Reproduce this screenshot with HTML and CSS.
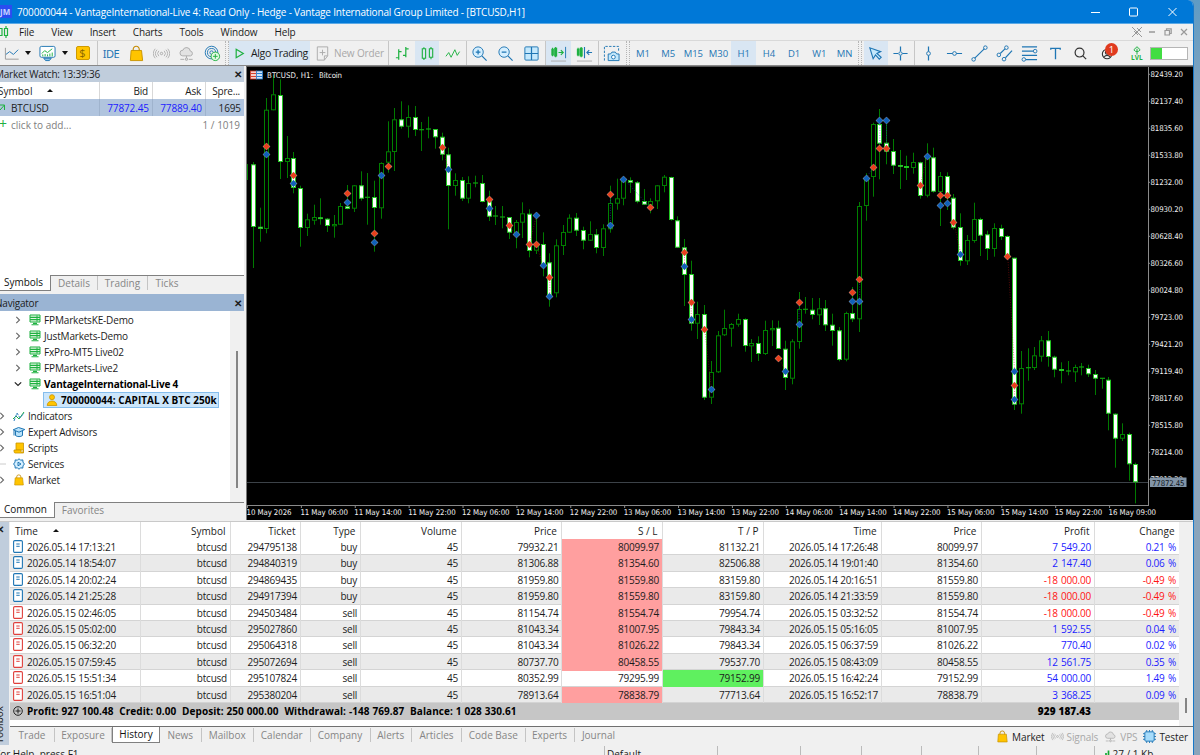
FILE: index.html
```html
<!doctype html>
<html>
<head>
  <meta charset="utf-8">
  <title>700000044 - VantageInternational-Live 4</title>
  <link rel="stylesheet" href="styles.css">
</head>
<body>

<!-- shared icons -->
<svg class="sprite">
  <symbol id="server" viewBox="0 0 12 12">
    <path d="M1 1h10v7H1z" fill="#e4f7e4" stroke="#1fb141"/>
    <path d="M1 3.3h10M1 5.7h10" stroke="#1fb141" stroke-width="1.2"/>
    <path d="M2.5 10.8h7M4 9.4h4" stroke="#1fb141" stroke-width="1.1"/>
    <path d="M8 1.5v6" stroke="#1fb141"/>
  </symbol>
  <symbol id="bag" viewBox="0 0 18 18">
    <path d="M5.5 7V4.5a3.2 3.2 0 0 1 6.4 0V7" fill="none" stroke="#c48a00" stroke-width="1.2"/>
    <path d="M3.3 5.8h11l1.2 10.7H2.5z" fill="#ffc400" stroke="#c99400"/>
  </symbol>
  <symbol id="doc" viewBox="0 0 10 13">
    <rect x=".6" y=".6" width="8.8" height="11.8" rx="1.2" fill="#fff" stroke="currentColor" stroke-width="1.1"/>
    <path d="M3.3 4h3.4M3.3 6.3h3.4" stroke="currentColor"/>
  </symbol>
  <symbol id="cloud" viewBox="0 0 18 18">
    <path d="M5 11.5a3 3 0 0 1 .2-6A4 4 0 0 1 13 6.4a2.6 2.6 0 0 1 .3 5.1zM9 11.5V14M2.5 15.2h4M11.500 15.200h4" fill="#e2e2e2" stroke="#aaa"/>
    <circle cx="9" cy="15" r="1.3" fill="#ddd" stroke="#aaa"/>
  </symbol>
  <symbol id="signal" viewBox="0 0 18 18">
    <circle cx="9" cy="9" r="1.3" fill="none" stroke="#aaa"/>
    <path d="M6.200 6.200a4 4 0 0 0 0 5.600M11.800 6.200a4 4 0 0 1 0 5.600M4.300 5a6 6 0 0 0 0 8M13.700 5a6 6 0 0 1 0 8M2.300 4a8 8 0 0 0 0 10M15.700 4a8 8 0 0 1 0 10" fill="none" stroke="#aaa" stroke-width=".9"/>
  </symbol>
  <symbol id="right" viewBox="0 0 8 8"><path d="M2.300 .8L5.500 4 2.300 7.200" fill="none" stroke="#666" stroke-width="1.1"/></symbol>
</svg>

<div class="window">
  <header class="titlebar">
    <span class="logo">JM</span>
    <span class="title">700000044 - VantageInternational-Live 4: Read Only - Hedge - Vantage International Group Limited - [BTCUSD,H1]</span>
    <svg class="win-buttons" width="90" height="12" viewBox="0 0 90 12" fill="none" stroke="#fff">
      <path d="M0 6.500h9M77.500 2l8 8M85.500 2l-8 8"/>
      <rect x="38.500" y="2" width="8" height="8" rx="1"/>
    </svg>
  </header>

  <nav class="menubar">
    <svg width="9" height="14" viewBox="0 0 9 14" fill="none" stroke="#1fb141" stroke-width="1.200"><path d="M-1 3.500h3v7h-3M6 1v2.500M6 10.500V13M4.500 3.500h3v7h-3z"/></svg>
    <span>File</span><span>View</span><span>Insert</span><span>Charts</span><span>Tools</span><span>Window</span><span>Help</span>
    <svg class="mdi" width="58" height="12" viewBox="0 0 58 12" fill="none" stroke="#999">
      <path d="M1 1l10 10M11 1L1 11M6 2l4 4M3 5l4 4"/>
      <path d="M18 6h6" stroke-width="1.300"/>
      <path d="M34 4.500h4.500V9H34zM35.500 4V2.800h4.700v4.700H39" stroke-width="1.200"/>
      <path d="M50 3l6 6M56 3l-6 6" stroke-width="1.200"/>
    </svg>
  </nav>

  <div class="toolbar">
    <div><svg viewBox="0 0 18 18"><path d="M1.500 3v12h14" stroke="#999"/><path d="M2 10l4-3 4 3 5-5"/></svg></div>
    <div class="caret"></div>
    <div><svg viewBox="0 0 18 18"><rect x="1" y="1.500" width="16" height="11.500" rx="1.500" fill="#fff"/><path d="M5 14l2 2.500h4l2-2.500z" fill="#8cc4e8"/><path d="M3 9l3-3 3 2 5-4" stroke="#1fb141"/><path d="M4 12v-2M6.500 12V9.500M9 12v-2M11.500 12V9M14 12V8" stroke="#1fb141"/></svg></div>
    <div class="caret"></div>
    <div><span class="dollar">$</span></div>
    <div class="sep"></div>
    <div class="ide">IDE</div>
    <div><svg><use href="#bag"/></svg></div>
    <div><svg><use href="#signal"/></svg></div>
    <div><svg><use href="#cloud"/></svg></div>
    <div><svg viewBox="0 0 18 18"><circle cx="8" cy="8" r="6.700"/><circle cx="8" cy="8" r="4.300"/><circle cx="8" cy="8" r="1.800"/><circle cx="12" cy="12" r="4.500" fill="#e3f8e3" stroke="#1fb141"/><path d="M12 9.500v5M9.500 12h5" stroke="#1fb141"/></svg></div>
    <div class="grip"></div>
    <div class="active algo"><svg viewBox="0 0 18 18"><path d="M5.500 4.500l7.500 4.500-7.500 4.500z" stroke="#1fb141" stroke-width="1.300"/></svg>Algo Trading</div>
    <div class="order"><svg viewBox="0 0 18 18" stroke="#aaa"><path d="M3.500 2h11v9.500L11 16H3.500zM14.500 11.500H11V16M9 5v6M6 8h6"/></svg>New Order</div>
    <div class="sep"></div>
    <div><svg viewBox="0 0 18 18" stroke="#1fb141" stroke-width="1.300"><path d="M5 4.500v11M2 13.500h3M5 7h3M12.500 2v11M9.500 11h3M12.500 4h3"/></svg></div>
    <div class="active"><svg viewBox="0 0 18 18" stroke="#1fb141" stroke-width="1.200"><path d="M3.500 4h3.500v10H3.500zM5.200 2.500V4M5.200 14v2M11 4h3.500v9H11zM12.700 2v2M12.700 13v2"/></svg></div>
    <div><svg viewBox="0 0 18 18" stroke="#1fb141"><path d="M2 12l3-4 2.500 5 4-8 2.500 6 2.500-4"/></svg></div>
    <div class="sep"></div>
    <div><svg viewBox="0 0 18 18"><circle cx="7.500" cy="7.500" r="5.500" fill="#d5efff"/><path d="M11.500 11.500l5 5M7.500 5v5M5 7.500h5" stroke-width="1.300"/></svg></div>
    <div><svg viewBox="0 0 18 18"><circle cx="7.500" cy="7.500" r="5.500" fill="#d5efff"/><path d="M11.500 11.500l5 5M5 7.500h5" stroke-width="1.300"/></svg></div>
    <div><svg viewBox="0 0 18 18"><rect x="2" y="2" width="14" height="14" rx="1" fill="#c4e8fc"/><path d="M9 2v14M2 9h14" stroke-width="1.300"/></svg></div>
    <div class="sep"></div>
    <div class="active"><svg viewBox="0 0 18 18"><path d="M2 4.500h1.500v6H2zM5 3.500h2v8H5zM2.700 3v9M6 2v11M9 8h5M11.500 5.500L14 8l-2.500 2.500" stroke="#1fb141" stroke-width="1.200"/><path d="M16.500 2v12"/><path d="M1 17h16" stroke="#aaa"/></svg></div>
    <div><svg viewBox="0 0 18 18"><path d="M1.500 4.500H3v6H1.500zM4.500 3.500h2v8h-2zM2.200 3v9M5.500 2v11" stroke="#1fb141" stroke-width="1.200"/><path d="M9 2v12M17 8h-5.500M14 5.500L11.500 8l2.500 2.500" stroke-width="1.200"/><path d="M1 17h16" stroke="#aaa"/></svg></div>
    <div class="sep"></div>
    <div><svg viewBox="0 0 18 18"><path d="M1.500 16.500v-15h15v5" stroke-dasharray="2.500 1.500"/><path d="M5.500 9.500H8L9.500 7.500h3.500L14.500 9.500h2.500v7H5.500z" fill="#c4e8fc"/><circle cx="11" cy="12.800" r="2" fill="#fff"/></svg></div>
    <div class="grip"></div>
    <div>M1</div><div>M5</div><div>M15</div><div>M30</div><div class="active">H1</div><div>H4</div><div>D1</div><div>W1</div><div>MN</div>
    <div class="grip"></div>
    <div class="active"><svg viewBox="0 0 18 18"><path d="M3 3l3.500 11.500L9 10.500l4 4.500 2-2-4.500-4L14.500 7z" fill="#c4e8fc" stroke-width="1.200"/></svg></div>
    <div><svg viewBox="0 0 18 18"><path d="M9 1.500v5M9 11v5.500M1.500 9h5M11 9h5.500" stroke-width="1.300"/><circle cx="9" cy="9" r="1.800"/></svg></div>
    <div class="sep"></div>
    <div><svg viewBox="0 0 18 18"><path d="M9 1.500v5.500M9 11v5.500" stroke-width="1.300"/><circle cx="9" cy="9" r="2"/></svg></div>
    <div><svg viewBox="0 0 18 18"><path d="M1 9h6M11 9h6" stroke-width="1.300"/><circle cx="9" cy="9" r="2"/></svg></div>
    <div><svg viewBox="0 0 18 18"><path d="M4 14L14 4" stroke-width="1.200"/><circle cx="2.800" cy="15.200" r="1.900"/><circle cx="15.200" cy="2.800" r="1.900"/></svg></div>
    <div><svg viewBox="0 0 18 18"><path d="M4.500 9l5-5M10 13.500l7-7.500" stroke-width="1.200"/><circle cx="3" cy="10.500" r="1.900"/><circle cx="11" cy="2.800" r="1.900"/><circle cx="8.500" cy="15" r="1.900"/></svg></div>
    <div><svg viewBox="0 0 18 18"><path d="M1 2h16M1 6.500h12M1 11h16M5 15.500h12" stroke-width="1.200"/><circle cx="15" cy="6.500" r="1.900"/><circle cx="3" cy="15.300" r="1.900"/></svg></div>
    <div><svg viewBox="0 0 18 18"><path d="M4 5V3.500h10V5M9 3.500V15" stroke-width="1.400"/></svg></div>
    <div><svg viewBox="0 0 18 18" stroke="#333" stroke-width="1.300"><circle cx="8" cy="8" r="4.700"/><path d="M11.500 11.500l3.500 3.500"/></svg></div>
    <div class="user"><svg viewBox="0 0 18 18" stroke="#333" stroke-width="1.200"><circle cx="7.500" cy="9.500" r="5"/><circle cx="7.500" cy="8" r="1.800"/><path d="M4.500 12.500c1.500-2 4.500-2 6 0"/></svg><span class="badge">1</span></div>
    <div class="lvl"><svg viewBox="0 0 10 10" stroke="#1fb141" stroke-width="1.100"><path d="M5 .8L8.500 4.200 6.500 6h-3l-2-1.800zM5 3v6.500"/></svg>LVL</div>
    <div class="battery"><i></i></div>
  </div>

  <main>
    <aside>
      <div class="panel-head"><span>Market Watch: 13:39:36</span><b>✕</b></div>
      <div class="watch watch-head"><span>Symbol <i class="up"></i></span><span>Bid</span><span>Ask</span><span>Spre...</span></div>
      <div class="watch watch-row"><span><svg width="6" height="8" viewBox="0 0 6 8"><path d="M0 1h4.500v5M4.500 1L0 6" fill="none" stroke="#1fb141"/></svg>BTCUSD</span><span class="blue">77872.45</span><span class="blue">77889.40</span><span>1695</span></div>
      <div class="watch-add"><span><i>+</i>click to add...</span><span>1 / 1019</span></div>
      <div class="blank"></div>
      <div class="tabs market-tabs"><span class="on">Symbols</span><span>Details</span><span>Trading</span><span>Ticks</span></div>
      <div class="panel-head nav-head"><span>Navigator</span><b>✕</b></div>
      <div class="navigator">
        <ul>
          <li class="sub"><svg class="exp"><use href="#right"/></svg><svg><use href="#server"/></svg>FPMarketsKE-Demo</li>
          <li class="sub"><svg class="exp"><use href="#right"/></svg><svg><use href="#server"/></svg>JustMarkets-Demo</li>
          <li class="sub"><svg class="exp"><use href="#right"/></svg><svg><use href="#server"/></svg>FxPro-MT5 Live02</li>
          <li class="sub"><svg class="exp"><use href="#right"/></svg><svg><use href="#server"/></svg>FPMarkets-Live2</li>
          <li class="sub bold"><svg class="exp" viewBox="0 0 8 8"><path d="M.8 2.300L4 5.500l3.200-3.200" fill="none" stroke="#222" stroke-width="1.200"/></svg><svg><use href="#server"/></svg>VantageInternational-Live 4</li>
          <li class="account bold"><span><svg viewBox="0 0 12 12" fill="#ffc400" stroke="#c99400" stroke-width=".8"><circle cx="6" cy="3.200" r="2.500"/><path d="M1.200 11.500c0-6 9.600-6 9.600 0z"/></svg>700000044: CAPITAL X BTC 250k</span></li>
          <li><svg class="exp"><use href="#right"/></svg><svg viewBox="0 0 12 12" fill="none"><path d="M0 9l3-3 3 3 5-7" stroke="#1fb141"/><path d="M1 11l3-8 3 5 4-5" stroke="#2b7fbf" stroke-dasharray="3 1"/></svg>Indicators</li>
          <li><svg class="exp"><use href="#right"/></svg><svg viewBox="0 0 12 12" fill="#b9e2fa" stroke="#1f76b4"><path d="M2.500 5v4.500c2 1.500 5 1.500 7 0V5"/><path d="M.2 3.800L5.500 1.500l6.300 2L6 6.200zM1 4.500v5"/></svg>Expert Advisors</li>
          <li><svg class="exp"><use href="#right"/></svg><svg viewBox="0 0 12 12" fill="#ffc400" stroke="#c99400" stroke-width=".8"><path d="M3 1h7.500v7H3z"/><path d="M1 8h7v1.500c0 1 2.500 1 2.500-1.500v3H2C1 11 1 9 1 8z"/></svg>Scripts</li>
          <li><svg class="exp" viewBox="0 0 8 8"><path d="M2 4h6" stroke="#ccc"/></svg><svg viewBox="0 0 12 12" fill="#d5efff" stroke="#1f76b4"><path d="M6 .7l1.500 1.500 2.300-.3.200 2.200L11.400 6 10 7.900l-.2 2.200-2.300-.3L6 11.300 4.500 9.800l-2.300.3L2 7.900.6 6 2 4.100l.2-2.200 2.300.3z"/><path d="M5 4.200L8 6 5 7.800z"/></svg>Services</li>
          <li><svg class="exp"><use href="#right"/></svg><svg><use href="#bag"/></svg>Market</li>
        </ul>
        <div class="rail"><i></i></div>
      </div>
      <div class="tabs nav-tabs"><span class="on">Common</span><span>Favorites</span></div>
    </aside>
    <section class="chart">
      <svg id="chart" width="947" height="453" viewBox="247 67 947 453"></svg>
    </section>
  </main>

  <section class="toolbox">
    <div class="strip"><b>✕</b><span>Toolbox</span></div>
    <div class="history">
      <div class="deals">
        <div id="deals">
          <div class="row head"><span>Time <i class="up"></i></span><span>Symbol</span><span>Ticket</span><span>Type</span><span>Volume</span><span>Price</span><span>S / L</span><span>T / P</span><span>Time</span><span>Price</span><span>Profit</span><span>Change</span></div>
        </div>
        <div class="rail"><i></i></div>
      </div>
      <div class="bottom">
        <div class="tabs box-tabs"><span>Trade</span><span>Exposure</span><span class="on">History</span><span>News</span><span>Mailbox</span><span>Calendar</span><span>Company</span><span>Alerts</span><span>Articles</span><span>Code Base</span><span>Experts</span><span>Journal</span></div>
        <div class="services">
          <span><svg><use href="#bag"/></svg>Market</span>
          <span class="off"><svg><use href="#signal"/></svg>Signals</span>
          <span class="off"><svg><use href="#cloud"/></svg>VPS</span>
          <span><svg viewBox="0 0 14 14" stroke="#1f76b4"><path d="M4 0v14M7 0v14M10 0v14M0 4h14M0 7h14M0 10h14"/><rect x="2" y="2" width="10" height="10" rx="1" fill="#a6dcfb"/></svg>Tester</span>
        </div>
      </div>
    </div>
  </section>

  <footer>
    <span>For Help, press F1</span><span>Default</span><span></span><span></span><span></span><span></span><span></span><span></span>
    <span class="traffic"><svg width="10" height="10" viewBox="0 0 10 10"><path d="M1 10V7.500M3.500 10V5.500M6 10V3M8.500 10V.5" stroke="#14a832" stroke-width="1.700"/></svg>27 / 1 Kb</span>
  </footer>
</div>

<script src="app.js"></script>
</body>
</html>
```
FILE: styles.css
```css
* {
  box-sizing: border-box;
}
body {
  margin: 0;
  width: 1200px; height: 755px;
  overflow: hidden;
  background: linear-gradient(#5f9bc4, #8ba6bd 120px, #8ba4ba);
  font-family: "Open Sans", "Noto Sans", sans-serif;
  font-size: 10px;
  letter-spacing: -0.22px;
  color: #1c1c1c;
}
i { font-style: normal; }
.sprite { display: none; }
.window {
  display: flex; flex-direction: column;
  width: 1194px; height: 755px;
  border-right: 1px solid #1878c8;
  border-top-right-radius: 6px;
  background: #f0f0f0;
  overflow: hidden;
}

/* title and menu */
.titlebar {
  display: flex; align-items: center;
  flex: none; height: 24px;
  background: #0078d7;
  border-bottom: 1px solid #5aa9e6;
  color: #fff;
  white-space: nowrap;
}
.title { letter-spacing: -0.17px; }
.logo {
  width: 12px; height: 13px;
  margin-right: 5px;
  background: #2a4df0;
  color: #c8d4ff;
  font-size: 8px; font-weight: bold; line-height: 13px;
  letter-spacing: 0;
}
.win-buttons { margin-left: auto; margin-right: 12px; }
.menubar {
  display: flex; align-items: center;
  flex: none; height: 17px;
  border-bottom: 1px solid #d9d9d9;
}
.menubar svg:first-child { margin-right: 10px; }
.menubar span { margin-right: 17.2px; letter-spacing: -0.17px; }
.menubar .mdi { margin-left: auto; margin-right: 4px; }

/* toolbar */
.toolbar {
  display: grid;
  grid-template-columns: 24px 8px 30px 6px 29px 1px 26px 25px 25px 25.5px 25.5px 4px 81px 77px 2px 26px 24px 26.5px 1px 26.5px 25px 26px 2px 24.5px 27px 1px 26.5px 5.4px repeat(9, 25.2px) 6.8px 24px 26px 2px 26px 25px 25px 25px 26px 25px 25px 31px 26px 43px;
  flex: none; height: 25px;
  border-bottom: 1px solid #888;
  color: #1f76b4;
  letter-spacing: 0;
}
.toolbar > div {
  display: flex; align-items: center; justify-content: center;
  min-width: 0;
  font-size: 9.5px;
}
.toolbar svg { flex: none; width: 17px; height: 17px; }
.toolbar div > svg { fill: none; }
.toolbar svg:not([stroke]) { stroke: #1f76b4; }
.toolbar .active { background: #d9e6f3; }
.toolbar .sep { background: #c6c6c6; justify-self: center; width: 1px; }
.toolbar .grip { border-left: 1px dotted #b5b5b5; border-right: 1px dotted #b5b5b5; width: 4px; justify-self: center; }
.caret::before {
  content: "";
  border: 3px solid transparent;
  border-top: 4px solid #111; border-bottom: 0;
}
.dollar {
  width: 14px; height: 14px;
  border: 1px solid #cf9a00; border-radius: 2px;
  background: #ffc400;
  color: #8a6400;
  font-size: 11px; line-height: 12px; text-align: center;
}
.toolbar .ide { font-size: 11px; font-family: "Noto Sans", sans-serif; letter-spacing: -0.5px; }
.toolbar .algo, .toolbar .order {
  justify-content: flex-start;
  padding-left: 2px;
  font-size: 10.5px;
  letter-spacing: -0.35px;
  color: #1c1c1c;
  white-space: nowrap;
}
.toolbar .algo svg { margin-right: 3px; }
.toolbar .order { color: #a8a8a8; padding-left: 4px; font-size: 10px; letter-spacing: -0.15px; }
.toolbar .order svg { margin-right: 3px; }
.toolbar .user { position: relative; }
.badge {
  position: absolute; left: 12px; top: 2px;
  width: 13px; height: 13px;
  border-radius: 50%;
  background: #e03a1e;
  color: #fff;
  line-height: 13px; text-align: center;
}
.toolbar .lvl { flex-direction: column; font-size: 6.5px; font-weight: bold; line-height: 6px; color: #1fb141; }
.toolbar .lvl svg { width: 10px; height: 9px; }
.toolbar .battery { justify-content: flex-start; }
.battery i {
  width: 38px; height: 13px;
  border: 1px solid #b5b5b5;
  background: linear-gradient(90deg, #42dd42 11px, #fff 11px);
}

/* left column */
main { display: flex; flex: none; height: 454px; }
aside {
  display: flex; flex-direction: column;
  width: 246px;
  padding: 0 2px 1px 0;
}
.panel-head {
  display: flex; align-items: center; justify-content: space-between;
  flex: none; height: 16px;
  padding-right: 2px;
  background: #c0cddc;
}
.panel-head span { margin-left: -5px; }
.nav-head { height: 17px; margin-top: 3px; background: #9ab4d3; }
.watch {
  display: grid;
  grid-template-columns: 100px 53px 53px 38px;
  flex: none; height: 17px;
  line-height: 18px;
  background: #fff;
}
.watch span { padding-right: 4px; border-right: 1px solid #d8d8d8; text-align: right; }
.watch span:last-child { border: 0; }
.watch span:first-child { text-align: left; }
.watch-head span:first-child { margin-left: -2px; letter-spacing: 0; }
.watch-row { background: #b0c4de; letter-spacing: -0.1px; }
.watch-row span { border-color: #9fb3cd; padding-right: 3px; }
.watch-row svg { margin-right: 5px; }
.up {
  display: inline-block;
  margin: 0 0 3px 12px;
  border: 3px solid transparent;
  border-bottom: 3px solid #111; border-top: 0;
}
.watch-add {
  display: flex; justify-content: space-between;
  flex: none; height: 17px;
  padding-right: 4px;
  background: #fff;
  color: #808080;
  line-height: 18px;
  letter-spacing: 0;
}
.watch-add i { display: inline-block; width: 12px; margin-left: -1px; color: #1fb141; font-size: 14px; line-height: 10px; }
.blank { flex: 1; background: #fff; }

.tabs {
  display: grid;
  flex: none; height: 16px;
  border-top: 1px solid #808080;
  color: #868686;
  line-height: 15px;
  text-align: center;
  letter-spacing: 0;
}
.tabs span { border-right: 1px solid #c4c4c4; height: 14px; }
.tabs span:last-child { border: 0; }
.tabs .on {
  height: 16px;
  margin-top: -1px;
  border: 1px solid #808080; border-top: 0;
  background: #fff;
  color: #111;
}
.market-tabs { grid-template-columns: 51px 47px 50px 38px; }
.market-tabs .on, .nav-tabs .on { border-left: 0; padding-right: 3px; }
.nav-tabs { grid-template-columns: 55px 56px; height: 17px; }

.navigator { display: flex; flex: none; height: 191px; background: #fff; }
.navigator ul { flex: 1; margin: 0; padding: 1px 0 0; list-style: none; }
.navigator li {
  display: flex; align-items: center;
  height: 16.05px;
  white-space: nowrap;
}
.navigator li svg { width: 12px; height: 12px; margin-right: 4px; }
.navigator li .exp { width: 8px; height: 8px; margin: 0 5px 0 -2px; }
.navigator li .exp + svg { margin-left: 2px; margin-right: 3px; }
.navigator li.sub { letter-spacing: -0.15px; }
.navigator li.sub.bold { letter-spacing: -0.2px; }
.navigator li.sub .exp { margin: 0 5px 0 14px; }
.navigator .sub .exp + svg { margin-left: 2px; }
.bold { font-weight: bold; color: #000; }
.navigator .account span {
  display: flex; align-items: center;
  height: 16px;
  margin-left: 43px; padding: 0 1px 0 2px;
  border: 1px solid #85bdec;
  background: #cce6fb;
  letter-spacing: 0.03px;
}
.navigator .account svg { margin-right: 3px; }
.rail { width: 14px; background: #f0f0f0; }
.navigator .rail i { display: block; width: 2px; height: 137px; margin: 40px 0 0 6px; background: #858585; }

/* price chart */
.chart {
  width: 947px;
  border-top: 1px solid #555; border-left: 1px solid #777;
  background: #000;
}
.chart svg { display: block; }
.chart text { fill: #f2f2f2; font: 7.8px "DejaVu Sans Condensed", "DejaVu Sans", sans-serif; letter-spacing: 0; }
.chart text.last { fill: #10161c; }
.wick { stroke: #007a00; stroke-width: 1; }
.up-bar { fill: #000; stroke: #008000; }
.down-bar { fill: #fff; stroke: #22c522; }
.flat { stroke: #10a010; stroke-width: 1.2; }
.axis { stroke: #8a8a8a; fill: none; }
.link { fill: none; stroke-dasharray: 1 1.5; stroke-width: .7; opacity: .75; }

/* toolbox */
.toolbox { display: flex; flex: none; height: 225px; border-top: 1px solid #c9c9c9; margin-top: 1px; }
.strip {
  display: flex; flex-direction: column; justify-content: space-between;
  width: 9px; height: 223px;
  background: #c0cddc;
  overflow: hidden;
}
.strip b { margin-left: -4px; }
.strip span { writing-mode: vertical-rl; transform: rotate(180deg); margin-left: -8px; margin-bottom: 2px; letter-spacing: 0; }
.history { width: 1184px; }
.deals { display: flex; height: 204px; background: #fff; margin-left: 1px; }
.row {
  display: grid;
  grid-template-columns: 130.5px 90px 70px 60px 101px 100.5px 100.5px 101px 118px 100px 113px 84px;
  height: 16.4px;
  border-bottom: 1px solid #d4d4d4;
  line-height: 16.8px;
}
.row span { padding-right: 2.5px; border-right: 1px solid #dcdcdc; text-align: right; white-space: nowrap; }
.row span:first-child { text-align: left; }
.row span:last-child { border: 0; }
.row:nth-child(odd) { background: #eaeaea; }
.row.head { height: 17px; background: #fff; border: 0; line-height: 18px; }
.row.head span { padding: 0 4px 0 5px; letter-spacing: 0; }
.row svg { float: left; width: 10px; height: 13px; margin: 1px 4px 0 3px; }
.buy svg { color: #1f76b4; }
.sell svg { color: #e0403c; }
.blue { color: #1c1cff; }
.red { color: #ff1414; }
.row .blue, .row .red { word-spacing: 1px; }
.row .sl { background: #ff9f9f; }
.row .tp { background: #5ff05f; }
.total {
  display: flex; align-items: center;
  height: 16.6px;
  background: #c6c6c6;
  font-weight: bold; color: #000;
  letter-spacing: 0.05px; word-spacing: 0.3px;
  white-space: pre;
}
.total svg { width: 10px; height: 10px; margin: 0 4px 0 3px; }
.total b { margin-left: auto; margin-right: 87.500px; }
.deals .rail i { display: block; width: 2px; height: 15px; margin: 176px 0 0 6px; background: #858585; }
.bottom { display: flex; height: 20px; border-top: 1px solid #707070; margin-left: 1px; }
.bottom .tabs { height: 17px; border: 0; margin-top: 1px; }
.box-tabs { grid-template-columns: 45px 57px 48px 41.500px 52.500px 56.500px 60px 41.500px 50px 63.500px 49px 48px; }
.services { display: flex; margin-left: auto; padding-right: 5px; letter-spacing: -0.1px; }
.services span { display: flex; align-items: center; margin-left: 6px; }
.services svg { width: 13px; height: 13px; margin-right: 3px; fill: none; }
.services .off { color: #a8a8a8; }

footer {
  display: grid;
  grid-template-columns: 605px 112.500px 83.500px 60.500px 60px 57px 58px 58px 1fr;
  flex: none; height: 20px;
  line-height: 16px;
}
footer span { border-right: 1px solid #bbb; padding-left: 2px; letter-spacing: 0; }
footer span:first-child { text-indent: -7px; }
footer .traffic { border: 0; padding-left: 5px; }
footer svg { float: left; margin: 4px 3px 0 0; }
```
FILE: app.js
```js
// H1 bars: [high, open/close top, open/close bottom, low, kind] in canvas units
// kind: 0 = down, 1 = up, 2 = flat
var bars = [
  [162,164.3,227,268,0],[207.7,226.7,229,241.7,0],[98,109.7,229,233.3,1],[75,94.3,110.3,110.3,1],
  [79.3,95,162,179,0],[136,158,162,178,1],[152,158,188,193.3,0],[185.7,188,228,246.7,0],
  [213.7,219.3,228,236,1],[204.7,217,220.7,224.7,1],[198.3,217.3,219,224.7,0],[218,218.7,226,232,0],
  [215,224,226.3,237.7,1],[203,206,224.7,225,1],[185,206.3,209,209.3,0],[185,185.3,208.7,212,1],
  [171.3,185.3,198.7,200.7,0],[173,197.3,198,224.7,2],[180.7,197,208,251.7,0],[162.3,163,208.3,218.7,1],
  [121.3,151.3,162.7,172.7,1],[108,119.3,152,171,1],[101.3,119.3,126.7,128.7,0],[105.3,117,126.7,137.7,1],
  [106,117,130,136,0],[122,129.7,130.3,151,2],[116.7,129,129.7,138.3,2],[129,129,137.3,148.7,0],
  [132.7,136.7,154.7,160.3,0],[147.7,154.3,186,229.3,0],[173.3,180,186,195.7,1],[177,180,198.7,201,0],
  [176.3,183,198.7,203.3,1],[175.7,183,183.7,187.3,2],[175,183,202,202.3,0],[190.7,201.3,216.7,221,0],
  [206,216,217.3,225,2],[206,217,217.7,228.3,2],[217,217,232.7,239,0],[220,222,235.7,248.3,1],
  [202.3,213.3,222.7,238,1],[209.3,213.7,251,257.3,0],[215,244,250.7,254,1],[232.3,244,265.3,276.3,0],
  [253.3,262.3,296.7,306.7,0],[239.3,245.3,293.3,297.3,1],[225,232,246,255,1],[214.3,217.7,232.7,233,1],
  [213,217.7,230.7,236,0],[226.7,230,240.7,249.3,0],[221.3,234,240.7,241,1],[229,234.3,248,253.3,0],
  [224.3,228.3,248,256,1],[185.7,203,229.3,232.7,1],[178.7,198.3,203.7,209.7,1],[176.7,179.3,198.7,205.3,1],
  [177.3,180,182.7,193,0],[181,182.3,201.7,203.3,0],[189,201,204.7,205,0],[198.3,201,205.3,213.3,1],
  [185,185.3,201.3,209,1],[175,176.7,186,192.3,1],[176.7,177,220,220.7,0],[216.3,220.3,247.7,247.7,0],
  [239,247.3,275,306,0],[260.7,274,323.7,330.7,0],[301.7,314,323.7,339,1],[305,314,397.7,400,0],
  [361,372,397.7,404,1],[331,335.3,372.3,373,1],[309.7,328,335.3,336,1],[323,324,328.7,346.7,1],
  [313.7,319,324.7,326.7,1],[318.3,319,346,351.7,0],[339,343,346.3,362,1],[336.3,343,354,361,0],
  [320.7,330,354,355,1],[320.3,328,330.3,346,1],[320.7,327.7,349,349,0],[340.7,348.7,378,390,0],
  [339.3,341.3,378.7,384.3,1],[292,309,342,348.7,1],[297,309.3,310,313.7,2],[298,309.7,315,319.3,0],
  [298,308.3,315.3,325,1],[300,308.3,325.3,331,0],[313.7,324.7,331,345.7,0],[327,330.3,360,361.3,0],
  [311.7,313,359.7,361.3,1],[287,313,319.3,322,0],[202,206,319.3,332,1],[173.3,178.7,206,220.7,1],
  [122.7,124,177,196.7,1],[109,124,143.7,179.3,0],[120,142.7,151.7,164.3,0],[139,151,165.7,174,0],
  [150,165,166.7,189,0],[155.7,166,168,180,0],[152.7,162,168,173.7,1],[161.7,162.3,196,198.7,0],
  [143.3,156.7,195.7,197.3,1],[147.7,157.3,191.7,192.7,0],[172,176,192,226,1],[172.3,176,198,210,0],
  [194,197.7,227.7,229.3,0],[213.3,227,261,265.7,0],[235,240,261.3,265,1],[202.7,219,241,242.7,1],
  [217.7,219,235.7,256,0],[230.7,234.3,249,260,0],[223.3,228,249,256.7,1],[224.7,228,237,240,0],
  [235.3,236,257,260,0],[257.7,257.7,404.7,410,0],[351,368,404.3,413.7,1],[348.3,367.7,368.3,380.7,2],
  [347,355.3,368,370,1],[336,340.3,356.7,361.7,1],[331,340.3,357,366.7,0],[355.7,356.7,369.7,377.3,0],
  [362.3,369,371,383.3,0],[361,371,372,375.3,2],[364.7,367,372.3,382,1],[363,367,368.3,375.3,2],
  [364.7,368,374.3,377,0],[370,374,378.7,395,0],[378,378.3,379.7,388.7,2],[377,379.7,413.7,430.3,0],
  [413.3,413.7,438.7,467.7,0],[423.3,434,438.7,441,1],[432.7,434,464.3,480.7,0],[462.7,464,482.3,503.3,0]
];

// deal marks: [bar, y]
var sells = [[2,146],[6,175],[14,193.3],[18,233.7],[20,166.3],[28,147.3],[35,199.7],[38,225.7],[41,244.3],[42,244.3],
  [44,277.3],[53,194.7],[59,207.7],[64,252],[65,302.7],[67,329.3],[78,358],[81,302.7],[89,292.7],[90,279.3],
  [92,167],[93,148.7],[94,148.7],[99,185],[102,195],[103,195],[104,222.3],[112,256.7],[113,385.7]];
var buys = [[2,154.3],[6,183.7],[14,202],[18,242],[19,175],[29,169.7],[35,208.3],[39,234.7],[42,215.7],[43,265.7],
  [44,296.3],[53,225.3],[55,179],[64,266.3],[65,319.7],[68,389],[79,371],[81,324],[89,301.3],[90,301.3],
  [91,178.3],[93,120.3],[94,120.3],[100,156.7],[102,205.3],[103,203.7],[105,254.3],[113,371],[113,399.7]];
// dotted lines joining entry and exit: [bar, y, bar, y, colour]
var links = [[28,147,29,170,'#a01010'],[38,226,39,235,'#a01010'],[41,244,42,216,'#a01010'],[42,244,43,266,'#a01010'],
  [44,277,44,296,'#d02020'],[53,195,53,225,'#2040c0'],[55,179,59,208,'#2040c0'],[64,252,64,266,'#d02020'],
  [65,303,65,320,'#d02020'],[67,329,68,389,'#a01010'],[78,358,79,371,'#a01010'],[81,303,81,324,'#2040c0'],
  [90,279,90,301,'#2040c0'],[91,178,92,167,'#2040c0'],[93,120,93,149,'#2040c0'],[94,120,94,149,'#2040c0'],
  [99,185,100,157,'#a01010'],[104,222,105,254,'#a01010'],[112,257,113,371,'#a01010'],[113,386,113,400,'#d02020']];

function x(i) { return 253.4 + i * 6.736; }

function mark(i, y, color) {
  var c = Math.floor(x(i)) + 0.5, r = Math.floor(y) + 0.5;
  return '<path d="M' + (c - 3.5) + ' ' + r + 'h7" stroke="#c8c8c8"/>' +
    '<path d="M' + c + ' ' + (r - 3.8) + 'l3.8 3.8-3.8 3.8-3.8-3.8z" fill="#b0b0b0"/>' +
    '<path d="M' + c + ' ' + (r - 3.4) + 'l3.4 3.4-3.4 3.4-3.4-3.4z" fill="' + color + '"/>';
}

function drawChart() {
  var out = '<path class="axis" d="M1148.5 66V506M246 505.500H1148.500"/>' +
    '<path d="M246 482.500H1148" stroke="#3c4248"/>' +
    '<rect class="up-bar" x="243.500" y="164.500" width="4" height="15"/>';
  bars.forEach(function (b, i) {
    var c = Math.floor(x(i)) + 0.5;
    out += '<path class="wick" d="M' + c + ' ' + b[0] + 'V' + b[3] + '"/>';
    if (b[4] === 2) {
      out += '<path class="flat" d="M' + (c - 2.5) + ' ' + b[1] + 'h5"/>';
    } else {
      var h = Math.max(b[2] - b[1] - 1, 0.8);
      out += '<rect class="' + (b[4] ? 'up-bar' : 'down-bar') + '" x="' + (c - 2) + '" y="' + (b[1] + 0.5) + '" width="4" height="' + h + '"/>';
    }
  });
  links.forEach(function (l) {
    out += '<path class="link" stroke="' + l[4] + '" d="M' + x(l[0]) + ' ' + l[1] + 'L' + x(l[2]) + ' ' + l[3] + '"/>';
  });
  sells.forEach(function (m) { out += mark(m[0], m[1], '#e8401c'); });
  buys.forEach(function (m) { out += mark(m[0], m[1], '#1060b8'); });

  // price scale
  for (var p = 0; p < 16; p++) {
    var y = 74.3 + p * 27;
    out += '<path class="axis" d="M1148 ' + y + 'h2"/>' +
      '<text x="1150.500" y="' + (y + 3) + '" textLength="32.500">' + (82439.2 - p * 301.8).toFixed(2) + '</text>';
  }
  out += '<rect x="1150" y="477.500" width="36.500" height="9.500" fill="#8295a8"/>' +
    '<text class="last" x="1152" y="485.500" textLength="32.500">77872.45</text>';

  // time scale
  var times = ['10 May 2026'];
  for (var d = 11; d < 16; d++) times.push(d + ' May 06:00', d + ' May 14:00', d + ' May 22:00');
  times.push('16 May 09:00');
  times.forEach(function (t, n) {
    var tx = 246.5 + n * 53.88;
    out += '<path class="axis" d="M' + (tx + 1) + ' 506v2"/>' +
      '<text x="' + tx + '" y="515" textLength="' + (n ? 47.5 : 45) + '">' + t + '</text>';
  });

  // caption
  out += '<rect x="250.500" y="71" width="6" height="8" fill="#f6d0cc" stroke="#d8402c" stroke-width=".8"/>' +
    '<rect x="256.500" y="71" width="6" height="8" fill="#cfe4f8" stroke="#2b7fd0" stroke-width=".8"/>' +
    '<path d="M251 73.500h5M251 76.500h5" stroke="#d8402c"/><path d="M257 73.500h5M257 76.500h5" stroke="#2b7fd0"/>' +
    '<text x="267" y="78" textLength="46">BTCUSD, H1:</text><text x="319" y="78" textLength="23">Bitcoin</text>';
  document.getElementById('chart').innerHTML = out;
}

var deals = [
  ['2026.05.14 17:13:21','294795138','buy','79932.21','80099.97','81132.21','2026.05.14 17:26:48','80099.97','7 549.20','0.21 %'],
  ['2026.05.14 18:54:07','294840319','buy','81306.88','81354.60','82506.88','2026.05.14 19:01:40','81354.60','2 147.40','0.06 %'],
  ['2026.05.14 20:02:24','294869435','buy','81959.80','81559.80','83159.80','2026.05.14 20:16:51','81559.80','-18 000.00','-0.49 %'],
  ['2026.05.14 21:25:28','294917394','buy','81959.80','81559.80','83159.80','2026.05.14 21:33:59','81559.80','-18 000.00','-0.49 %'],
  ['2026.05.15 02:46:05','294503484','sell','81154.74','81554.74','79954.74','2026.05.15 03:32:52','81554.74','-18 000.00','-0.49 %'],
  ['2026.05.15 05:02:00','295027860','sell','81043.34','81007.95','79843.34','2026.05.15 05:16:05','81007.95','1 592.55','0.04 %'],
  ['2026.05.15 06:32:20','295064318','sell','81043.34','81026.22','79843.34','2026.05.15 06:37:59','81026.22','770.40','0.02 %'],
  ['2026.05.15 07:59:45','295072694','sell','80737.70','80458.55','79537.70','2026.05.15 08:43:09','80458.55','12 561.75','0.35 %'],
  ['2026.05.15 15:51:34','295107824','sell','80352.99','79295.99','79152.99','2026.05.15 16:42:24','79152.99','54 000.00','1.49 %'],
  ['2026.05.15 16:51:04','295380204','sell','78913.64','78838.79','77713.64','2026.05.15 16:52:17','78838.79','3 368.25','0.09 %']
];

function drawDeals() {
  var out = '';
  deals.forEach(function (d) {
    var sl = d[4] === d[7] ? 'sl' : '';
    var tp = d[5] === d[7] ? 'tp' : '';
    // stopped out at a loss keeps the mark even when the stop slipped
    if (d[8][0] === '-') sl = 'sl';
    var sign = d[8][0] === '-' ? 'red' : 'blue';
    out += '<div class="row ' + d[2] + '"><span><svg><use href="#doc"/></svg>' + d[0] + '</span><span>btcusd</span><span>' + d[1] +
      '</span><span>' + d[2] + '</span><span>45</span><span>' + d[3] + '</span><span class="' + sl + '">' + d[4] +
      '</span><span class="' + tp + '">' + d[5] + '</span><span>' + d[6] + '</span><span>' + d[7] +
      '</span><span class="' + sign + '">' + d[8] + '</span><span class="' + sign + '">' + d[9] + '</span></div>';
  });
  out += '<div class="total"><svg viewBox="0 0 10 10" fill="none" stroke="#222"><circle cx="5" cy="5" r="4.300"/><path d="M5 2.500v5M2.500 5h5"/></svg>' +
    'Profit: 927 100.48  Credit: 0.00  Deposit: 250 000.00  Withdrawal: -148 769.87  Balance: 1 028 330.61<b>929 187.43</b></div>';
  document.getElementById('deals').innerHTML += out;
}

drawChart();
drawDeals();
```
